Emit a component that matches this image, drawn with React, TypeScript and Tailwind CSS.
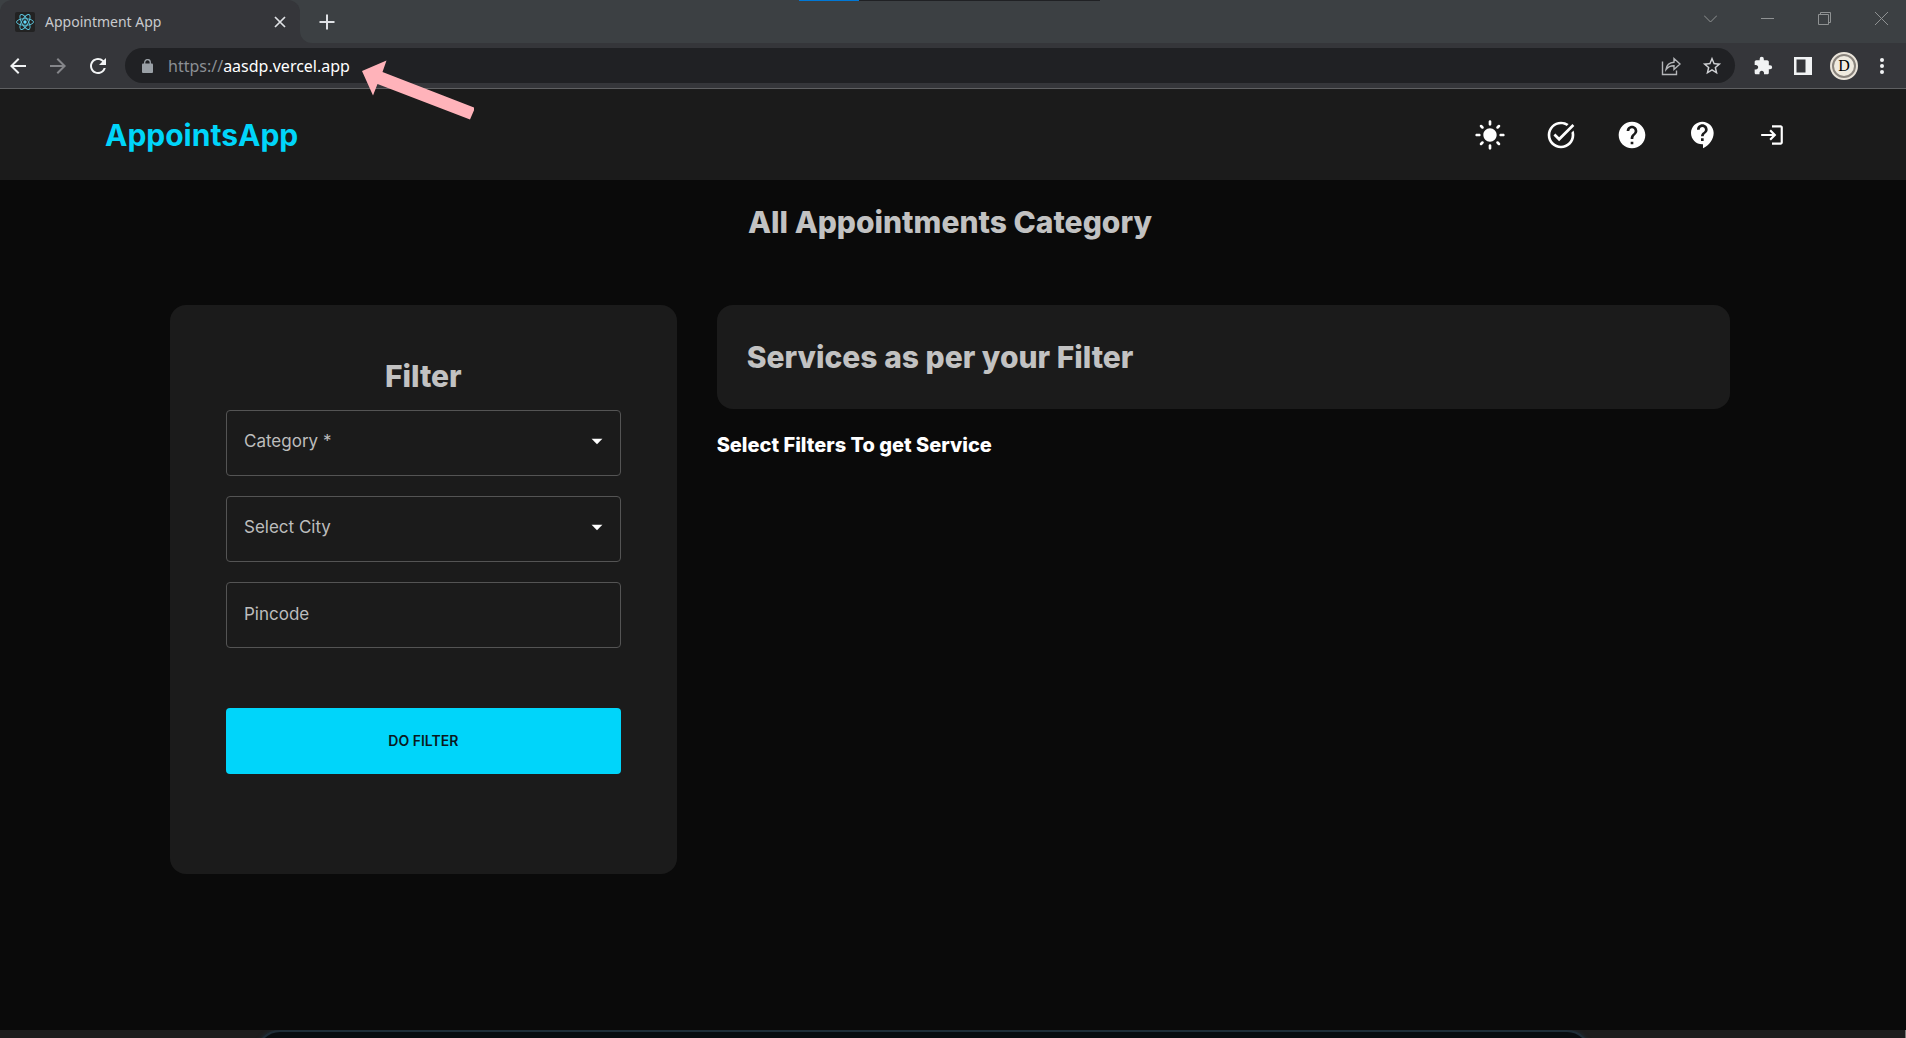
import { useState, type ReactNode } from "react";
import {
  MdLightMode,
  MdTaskAlt,
  MdHelp,
  MdContactSupport,
  MdLogin,
  MdArrowBack,
  MdArrowForward,
  MdRefresh,
  MdStarBorder,
  MdExtension,
  MdArrowDropDown,
} from "react-icons/md";

function ReactMark() {
  return (
    <svg viewBox="0 0 20 20" className="size-5" aria-hidden="true">
      <rect width="20" height="20" rx="2" fill="#222222" />
      <g fill="none" stroke="#5cc7e0" strokeWidth="0.9">
        <ellipse cx="10" cy="10" rx="8.5" ry="3.3" />
        <ellipse cx="10" cy="10" rx="8.5" ry="3.3" transform="rotate(60 10 10)" />
        <ellipse cx="10" cy="10" rx="8.5" ry="3.3" transform="rotate(120 10 10)" />
      </g>
      <circle cx="10" cy="10" r="1.7" fill="#61dafb" />
    </svg>
  );
}

function WindowButton({ label, path }: { label: string; path: string }) {
  return (
    <button type="button" aria-label={label} className="flex h-9 w-[50px] items-center justify-center">
      <svg viewBox="0 0 13 13" className="size-[13px]" fill="none" stroke="#8f9293" strokeWidth="1" aria-hidden="true">
        <path d={path} />
      </svg>
    </button>
  );
}

function TabStrip() {
  return (
    <div className="relative flex h-[43px] bg-[#3c4043]">
      <div className="flex w-[300px] items-center rounded-t-xl bg-[#35363a] pr-[10px] pl-[15px]">
        <ReactMark />
        <span className="ml-[10px] flex-1 text-sm text-[#c8cacd]">Appointment App</span>
        <button type="button" aria-label="Close tab" className="flex size-5 items-center justify-center">
          <svg viewBox="0 0 12 12" className="size-3" stroke="#dfe1e5" strokeWidth="1.7" aria-hidden="true">
            <path d="M1 1l10 10M11 1L1 11" />
          </svg>
        </button>
      </div>
      <div className="w-3 bg-[#35363a]">
        <div className="h-full rounded-bl-xl bg-[#3c4043]" />
      </div>
      <button type="button" aria-label="New tab" className="flex w-[30px] items-center justify-center">
        <svg viewBox="0 0 16 16" className="size-4" stroke="#dfe1e5" strokeWidth="2" aria-hidden="true">
          <path d="M8 .5v15M.5 8h15" />
        </svg>
      </button>
      <div className="absolute inset-x-0 top-0 flex justify-center pr-[7px]">
        <div className="flex h-px w-[301px] bg-[#202124]">
          <div className="w-[60px] bg-[#0078d7]" />
        </div>
      </div>
      <div className="ml-auto flex gap-[7px]">
        <WindowButton label="Search tabs" path="M0 3.500l6.500 6.500l6.500-6.500" />
        <WindowButton label="Minimize" path="M0 6.500h13" />
        <WindowButton label="Restore" path="M.5 2.500h10v10h-10zM2.500 2.500v-2h10v10h-2" />
        <WindowButton label="Close" path="M0 0l13 13M13 0L0 13" />
      </div>
    </div>
  );
}

function Toolbar() {
  return (
    <div className="flex h-[46px] items-center border-b border-[#5f6062] bg-[#35363a] text-[#f1f3f4]">
      <button type="button" aria-label="Back" className="flex w-[35px] justify-center">
        <MdArrowBack className="size-6" />
      </button>
      <button type="button" aria-label="Forward" className="flex w-[45px] justify-center text-[#85868a]">
        <MdArrowForward className="size-6" />
      </button>
      <button type="button" aria-label="Reload" className="flex w-[35px] justify-center">
        <MdRefresh className="size-6" />
      </button>
      <div className="ml-[10px] flex h-[35px] flex-1 items-center rounded-full bg-[#202124] pr-3 pl-[17px]">
        <svg viewBox="0 0 11 14" className="h-[14px] w-[11px]" aria-hidden="true">
          <rect y="4.500" width="11" height="9.500" rx="1" fill="#9aa0a6" />
          <path d="M2.700 5V3.400a2.800 2.800 0 0 1 5.600 0V5" fill="none" stroke="#9aa0a6" strokeWidth="1.300" />
        </svg>
        <div className="ml-[15px] flex-1 text-base text-white">
          <span className="text-[#8b8f94]">https://</span>aasdp.vercel.app
        </div>
        <button type="button" aria-label="Share this page" className="mr-5">
          <svg viewBox="0 0 20 20" className="size-5" fill="none" stroke="#b4b6b9" strokeWidth="1.4" aria-hidden="true">
            <path d="M1.500 5.500v13h14v-4" />
            <path d="M5 13.500c.6-4.600 3-7 8-7.300V2.500L19 8l-6 5.500V9.800C9.500 9.700 7 11 5 13.500z" />
          </svg>
        </button>
        <button type="button" aria-label="Bookmark this tab">
          <MdStarBorder className="size-[22px] text-[#d0d2d5]" />
        </button>
      </div>
      <button type="button" aria-label="Extensions" className="flex w-14 justify-center">
        <MdExtension className="size-5" />
      </button>
      <button type="button" aria-label="Side panel" className="flex w-[23px] justify-center">
        <svg viewBox="0 0 18 18" className="size-[18px]" aria-hidden="true">
          <path fill="#f1f3f4" fillRule="evenodd" d="M0 0h18v18H0zM2.500 2.500v13h9v-13z" />
        </svg>
      </button>
      <button
        type="button"
        aria-label="Profile D"
        className="ml-4 flex size-7 items-center justify-center rounded-full border-2 border-[#e9e3d9] bg-[#8a847d] p-[2px]"
      >
        <span className="flex size-full items-center justify-center rounded-full bg-[#f0ebe0] font-[Liberation_Serif,serif] text-base text-black">
          D
        </span>
      </button>
      <button type="button" aria-label="Menu" className="flex w-12 justify-center">
        <svg viewBox="0 0 4 16" className="h-4 w-1" fill="#f1f3f4" aria-hidden="true">
          <circle cx="2" cy="2" r="2" />
          <circle cx="2" cy="8" r="2" />
          <circle cx="2" cy="14" r="2" />
        </svg>
      </button>
    </div>
  );
}

function NavButton({ label, children }: { label: string; children: ReactNode }) {
  return (
    <button type="button" aria-label={label} className="flex h-8 min-w-7 items-center justify-center">
      {children}
    </button>
  );
}

function SelectField({ label, options }: { label: string; options: string[] }) {
  return (
    <div className="relative">
      <select
        aria-label={label}
        className="block h-[66px] w-full appearance-none rounded-[4px] border border-[#545454] bg-transparent px-[17px] pb-0.5 text-[17px] text-[#bdbdbd]"
      >
        <option>{label}</option>
        {options.map((o) => (
          <option key={o}>{o}</option>
        ))}
      </select>
      <MdArrowDropDown className="pointer-events-none absolute top-0 right-[11px] bottom-1 my-auto size-[26px] text-white" />
    </div>
  );
}

export default function App() {
  const [pincode, setPincode] = useState("");
  return (
    <div className="flex min-h-screen flex-col bg-[#0a0a0a] font-[Inter,sans-serif]">
      <div className="relative font-[Noto_Sans,sans-serif]">
        <TabStrip />
        <Toolbar />
        <svg viewBox="0 0 112 60" className="absolute top-[60px] left-[362px] h-[60px] w-28" aria-hidden="true">
          <path fill="#ffb3ba" d="M0 11L24.500 .5L20.500 12L113 48L108 59.500L15.500 24L11 35.500z" />
        </svg>
      </div>

      <header className="flex h-[91px] items-center justify-between bg-[#1b1b1b] pr-[120px] pl-[105px]">
        <a href="#" className="text-[30px] leading-9 font-bold text-[#00d5fa]">
          AppointsApp
        </a>
        <nav className="flex gap-[39px] text-white">
          <NavButton label="Light mode">
            <MdLightMode className="size-8" />
          </NavButton>
          <NavButton label="Appointments">
            <MdTaskAlt className="size-8" />
          </NavButton>
          <NavButton label="Help">
            <MdHelp className="size-8" />
          </NavButton>
          <NavButton label="Support">
            <MdContactSupport className="size-8" />
          </NavButton>
          <NavButton label="Log in">
            <MdLogin className="size-[26px]" />
          </NavButton>
        </nav>
      </header>

      <main className="flex-1 pt-6 pr-[176px] pl-[170px] text-[#c2c2c2]">
        <h1 className="mb-[65px] text-center text-[30px] leading-9 font-extrabold">All Appointments Category</h1>
        <div className="grid grid-cols-[1fr_2fr] items-start gap-10">
          <form className="flex flex-col gap-5 rounded-2xl bg-[#1b1b1b] px-14 pt-[53px] pb-[100px]" onSubmit={(e) => e.preventDefault()}>
            <h2 className="-mb-1 text-center text-[30px] leading-9 font-extrabold">Filter</h2>
            <SelectField label="Category *" options={["Health", "Beauty", "Education"]} />
            <SelectField label="Select City" options={["Delhi", "Mumbai", "Pune"]} />
            <input
              aria-label="Pincode"
              placeholder="Pincode"
              value={pincode}
              onChange={(e) => setPincode(e.target.value)}
              className="h-[66px] rounded-[4px] border border-[#545454] bg-transparent px-[17px] pb-0.5 text-[17px] text-[#bdbdbd] placeholder:text-[#bdbdbd]"
            />
            <button type="submit" className="mt-10 h-[66px] rounded-[4px] bg-[#00d5fa] text-sm font-semibold text-[#0a1a1f]">
              DO FILTER
            </button>
          </form>
          <section>
            <div className="rounded-2xl bg-[#1b1b1b] px-[30px] py-[34px]">
              <h2 className="text-[30px] leading-9 font-extrabold">Services as per your Filter</h2>
            </div>
            <p className="mt-[22px] text-xl leading-7 font-extrabold text-white">Select Filters To get Service</p>
          </section>
        </div>
      </main>

      <footer className="flex h-2 overflow-hidden border-r border-[#777777] bg-[#1d1d1d] pr-[314px] pl-64">
        <div className="h-10 flex-1 rounded-t-3xl border-2 border-[#1f2e38] bg-[#080d10] shadow-[0_0_4px_#1f2e38]" />
      </footer>
    </div>
  );
}
